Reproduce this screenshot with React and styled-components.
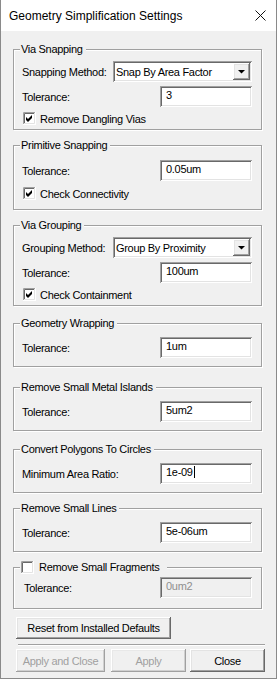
import React from 'react'
import styled, { createGlobalStyle } from 'styled-components'

const GlobalStyle = createGlobalStyle`
  html, body {
    margin: 0;
    padding: 0;
    background: #f0f0f0;
  }
  body {
    font-family: "Liberation Sans", Arial, sans-serif;
  }
`

const Window = styled.div`
  width: 277px;
  height: 679px;
  box-sizing: border-box;
  border: 1px solid #8a8a8a;
  border-top: none;
  background: #f0f0f0;
  display: flex;
  flex-direction: column;
  color: #000;
  font-size: 11px;
  letter-spacing: -0.3px;
`

const TitleBar = styled.div`
  height: 31px;
  flex: none;
  background: #fff;
  display: flex;
  align-items: center;
  justify-content: space-between;
  padding: 0 10px 0 8px;
`

const Title = styled.span`
  font-size: 12px;
  line-height: 14px;
  letter-spacing: 0;
`

const Body = styled.div`
  flex: 1;
  display: flex;
  flex-direction: column;
  align-items: flex-start;
  padding: 0 0 0 12px;
`

const Group = styled.fieldset`
  margin: ${p => p.$mt}px 0 0 0;
  padding: ${p => p.$pt}px 9px ${p => p.$pb}px 8px;
  width: 249px;
  min-width: 0;
  box-sizing: border-box;
  border: 1px solid #a0a0a0;
  box-shadow: inset 1px 1px #fff, 1px 1px #fff;
`

const Legend = styled.legend`
  margin-left: -2px;
  padding: 0 ${p => p.$pr || 3}px 0 1px;
  line-height: 14px;
  background: #f0f0f0;
  display: flex;
  align-items: center;
  gap: 5px;
`

const Row = styled.div`
  display: flex;
  align-items: center;
  justify-content: space-between;
  height: 21px;
  margin-top: ${p => p.$mt || 0}px;
  padding-left: ${p => p.$indent || 0}px;
`

const CheckRow = styled.div`
  display: flex;
  align-items: center;
  gap: 4px;
  height: 13px;
  margin: ${p => p.$mt || 0}px 0 0 1px;
`

const sunken = `
  box-shadow: inset 1px 1px #a0a0a0, inset -1px -1px #fff,
    inset 2px 2px #696969, inset -2px -2px #e3e3e3;
`

const raised = `
  box-shadow: inset -1px -1px #696969, inset 1px 1px #fff,
    inset -2px -2px #a0a0a0, inset 2px 2px #e3e3e3;
`

const Edit = styled.div`
  width: 92px;
  height: 21px;
  box-sizing: border-box;
  padding: 3px 4px 0 6px;
  line-height: 13px;
  white-space: nowrap;
  background: ${p => (p.$disabled ? '#f0f0f0' : '#fff')};
  color: ${p => (p.$disabled ? '#8f8f8f' : '#000')};
  ${sunken}
`

const Caret = styled.span`
  display: inline-block;
  width: 1px;
  height: 12px;
  margin-left: 1px;
  background: #000;
  vertical-align: -2px;
`

const Combo = styled.div`
  width: 139px;
  height: 21px;
  box-sizing: border-box;
  padding: 0 2px 0 3px;
  background: #fff;
  display: flex;
  align-items: center;
  justify-content: space-between;
  ${sunken}
`

const ComboButton = styled.div`
  width: 17px;
  height: 17px;
  background: #f0f0f0;
  display: flex;
  ${raised}
`

const Button = styled.button`
  font: inherit;
  letter-spacing: inherit;
  width: ${p => p.$w}px;
  height: ${p => p.$h}px;
  margin: 0 0 0 ${p => p.$ml || 0}px;
  padding: 0;
  border: none;
  background: #f0f0f0;
  color: ${p => (p.disabled ? '#a0a0a0' : '#000')};
  ${p =>
    p.disabled
      ? `box-shadow: inset -1px -1px #a0a0a0, inset 1px 1px #fff,
          inset -2px -2px #d0d0d0, inset 2px 2px #e8e8e8;`
      : raised}
`

const ResetButton = styled(Button)`
  margin: 8px 0 0 3px;
`

const Separator = styled.div`
  width: 247px;
  margin: 5px 0 0 5px;
  border-top: 1px solid #a0a0a0;
  border-bottom: 1px solid #fff;
`

const ButtonBar = styled.div`
  display: flex;
  margin: 3px 0 0 3px;
`

function CloseIcon() {
  return (
    <svg width="11" height="11" viewBox="0 0 11 11">
      <path d="M0.5 0.5 L10.5 10.5 M10.5 0.5 L0.5 10.5" stroke="#111" strokeWidth="1" />
    </svg>
  )
}

function Check({ checked }) {
  return (
    <svg width="13" height="13" viewBox="0 0 13 13" style={{ flex: 'none' }}>
      <rect x="0" y="0" width="13" height="13" fill="#fff" />
      <path d="M0.5 12 V0.5 H12" stroke="#a0a0a0" fill="none" />
      <path d="M1.5 11 V1.5 H11" stroke="#696969" fill="none" />
      <path d="M1 11.5 H11.5 V1" stroke="#e3e3e3" fill="none" />
      <path d="M0 12.5 H12.5 V0" stroke="#fff" fill="none" />
      {checked && <polygon points="3,5 5,7 9,3 9,6 5,10 3,8" fill="#000" />}
    </svg>
  )
}

function DownArrow() {
  return (
    <svg width="17" height="17" viewBox="0 0 17 17">
      <polygon points="5,7 12,7 8.5,10.5" fill="#000" />
    </svg>
  )
}

function Field({ label, children, mt, indent }) {
  return (
    <Row $mt={mt} $indent={indent}>
      <span>{label}</span>
      {children}
    </Row>
  )
}

function Dropdown({ value }) {
  return (
    <Combo>
      <span>{value}</span>
      <ComboButton>
        <DownArrow />
      </ComboButton>
    </Combo>
  )
}

function CheckField({ label, checked, mt }) {
  return (
    <CheckRow $mt={mt}>
      <Check checked={checked} />
      <span>{label}</span>
    </CheckRow>
  )
}

const simpleGroups = [
  { title: 'Geometry Wrapping', label: 'Tolerance:', value: '1um', mt: 10 },
  { title: 'Remove Small Metal Islands', label: 'Tolerance:', value: '5um2', mt: 13 },
  { title: 'Convert Polygons To Circles', label: 'Minimum Area Ratio:', value: '1e-09', mt: 11, caret: true },
  { title: 'Remove Small Lines', label: 'Tolerance:', value: '5e-06um', mt: 8 },
]

export default function App() {
  return (
    <>
      <GlobalStyle />
      <Window>
        <TitleBar>
          <Title>Geometry Simplification Settings</Title>
          <CloseIcon />
        </TitleBar>
        <Body>
          <Group $mt={11} $pt={5} $pb={4}>
            <Legend>Via Snapping</Legend>
            <Field label="Snapping Method:">
              <Dropdown value="Snap By Area Factor" />
            </Field>
            <Field label="Tolerance:" mt={4}>
              <Edit>3</Edit>
            </Field>
            <CheckField label="Remove Dangling Vias" checked mt={5} />
          </Group>

          <Group $mt={8} $pt={8} $pb={9}>
            <Legend>Primitive Snapping</Legend>
            <Field label="Tolerance:">
              <Edit>0.05um</Edit>
            </Field>
            <CheckField label="Check Connectivity" checked mt={6} />
          </Group>

          <Group $mt={8} $pt={5} $pb={4}>
            <Legend>Via Grouping</Legend>
            <Field label="Grouping Method:">
              <Dropdown value="Group By Proximity" />
            </Field>
            <Field label="Tolerance:" mt={4}>
              <Edit>100um</Edit>
            </Field>
            <CheckField label="Check Containment" checked mt={5} />
          </Group>

          {simpleGroups.map(g => (
            <Group key={g.title} $mt={g.mt} $pt={7} $pb={8}>
              <Legend>{g.title}</Legend>
              <Field label={g.label}>
                <Edit>
                  {g.value}
                  {g.caret && <Caret />}
                </Edit>
              </Field>
            </Group>
          ))}

          <Group $mt={8} $pt={3} $pb={10}>
            <Legend $pr={7}>
              <Check />
              <span>Remove Small Fragments</span>
            </Legend>
            <Field label="Tolerance:" indent={2}>
              <Edit $disabled>0um2</Edit>
            </Field>
          </Group>

          <ResetButton $w={155} $h={22}>Reset from Installed Defaults</ResetButton>
          <Separator />
          <ButtonBar>
            <Button $w={89} $h={23} disabled>Apply and Close</Button>
            <Button $w={75} $h={23} $ml={6} disabled>Apply</Button>
            <Button $w={75} $h={23} $ml={4}>Close</Button>
          </ButtonBar>
        </Body>
      </Window>
    </>
  )
}
